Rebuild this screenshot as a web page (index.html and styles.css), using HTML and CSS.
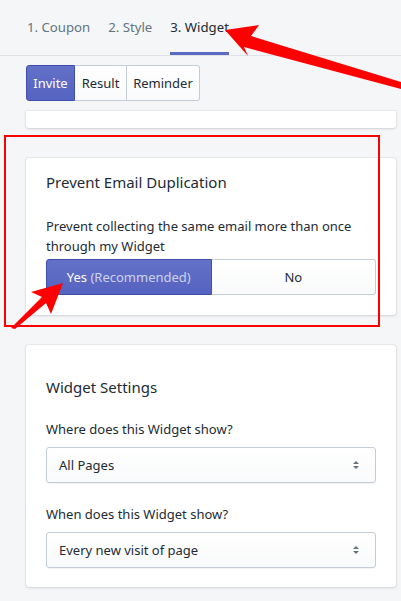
FILE: index.html
```html
<!DOCTYPE html>
<html>
<head>
<meta charset="utf-8">
<link rel="stylesheet" href="styles.css">
</head>
<body>
<div class="page">
  <nav class="tabs">
    <span class="tab">1. Coupon</span>
    <span class="tab">2. Style</span>
    <span class="tab active">3. Widget</span>
  </nav>
  <main class="content">
    <div class="seg">
      <button class="seg-btn primary w-invite">Invite</button>
      <button class="seg-btn w-result">Result</button>
      <button class="seg-btn w-reminder">Reminder</button>
    </div>
    <section class="card card-stub"></section>
    <section class="card card-dup">
      <h2 class="card-title">Prevent Email Duplication</h2>
      <p class="desc">Prevent collecting the same email more than once through my Widget</p>
      <div class="choice">
        <button class="choice-btn primary">Yes <span class="muted">(Recommended)</span></button>
        <button class="choice-btn">No</button>
      </div>
    </section>
    <section class="card card-settings">
      <h2 class="card-title">Widget Settings</h2>
      <label class="field-label">Where does this Widget show?</label>
      <div class="select"><span>All Pages</span><span class="caret"></span></div>
      <label class="field-label">When does this Widget show?</label>
      <div class="select"><span>Every new visit of page</span><span class="caret"></span></div>
    </section>
  </main>
  <div class="annot-box"></div>
  <svg class="annot-arrows" width="401" height="601" viewBox="0 0 401 601">
    <polygon points="225,30 259,25 251,36 401,82 401,89 244,47 248,56" fill="#ff0000"/>
    <polygon points="63,283 31,292 42,297 11,328 15,329 46,303 51,314" fill="#ff0000"/>
  </svg>
</div>
</body>
</html>
```
FILE: styles.css
```css
* { box-sizing: border-box; }
html, body { margin: 0; padding: 0; }
body {
  background: #f4f6f8;
  font-family: "Noto Sans", "Open Sans", sans-serif;
  color: #212b36;
  width: 401px;
  height: 601px;
  overflow: hidden;
}
.page { position: relative; width: 401px; height: 601px; }
.tabs {
  display: flex;
  height: 56px;
  padding-left: 27px;
  border-bottom: 1px solid #dfe3e8;
}
.tab {
  font-size: 13.2px;
  color: #637381;
  padding-top: 18px;
  height: 55px;
  border-bottom: 3px solid transparent;
  margin-right: 18px;
}
.tab.active { color: #212b36; border-bottom-color: #5c6ac4; }
.content {
  padding: 9px 5px 0 26px;
  display: flex;
  flex-direction: column;
}
.seg { display: flex; height: 36px; }
.seg-btn {
  font-family: inherit;
  font-size: 13px;
  color: #212b36;
  background: linear-gradient(#fff, #f9fafb);
  border: 1px solid #c4cdd5;
  border-left: none;
  padding: 0;
  margin: 0;
  height: 36px;
}
.seg-btn:last-child { border-radius: 0 3px 3px 0; }
.seg-btn.primary {
  background: linear-gradient(#6371c7, #5563c1);
  border: 1px solid #3f4eae;
  color: #fff;
  border-radius: 3px 0 0 3px;
}
.w-invite { width: 49px; }
.w-result { width: 52px; }
.w-reminder { width: 73px; }
.card {
  background: #fff;
  border-radius: 3px;
  box-shadow: 0 0 0 1px rgba(63,63,68,.05), 0 1px 3px 0 rgba(63,63,68,.15);
}
.card-stub { height: 17px; margin-top: 10px; border-radius: 0 0 3px 3px; }
.card-dup { margin-top: 30px; padding: 12px 20px 20px; }
.card-settings { margin-top: 30px; padding: 30px 20px 19px; }
.card-title {
  margin: 0;
  font-size: 15px;
  font-weight: 400;
  line-height: 24px;
}
.desc {
  margin: 22px 0 3px;
  font-size: 13px;
  line-height: 20px;
}
.choice { display: flex; height: 36px; }
.choice-btn {
  flex: 1;
  font-family: inherit;
  font-size: 13px;
  margin: 0;
  height: 36px;
  color: #212b36;
  background: linear-gradient(#fff, #f9fafb);
  border: 1px solid #c4cdd5;
  border-left: none;
  border-radius: 0 3px 3px 0;
}
.choice-btn.primary {
  background: linear-gradient(#6371c7, #5563c1);
  border: 1px solid #3f4eae;
  color: #fff;
  border-radius: 3px 0 0 3px;
}
.muted { color: rgba(255,255,255,.7); }
.field-label {
  display: block;
  font-size: 13px;
  line-height: 20px;
  margin: 20px 0 8px;
}
.select {
  height: 36px;
  border: 1px solid #c4cdd5;
  border-radius: 3px;
  background: linear-gradient(#fff, #f9fafb);
  box-shadow: 0 1px 0 0 rgba(22,29,37,.05);
  display: flex;
  align-items: center;
  justify-content: space-between;
  padding: 0 15px 0 12px;
  font-size: 13px;
}
.select + .field-label { margin-top: 21px; }
.caret {
  width: 8px;
  height: 10px;
  position: relative;
}
.caret::before, .caret::after {
  content: "";
  position: absolute;
  left: 1px;
  border-left: 3px solid transparent;
  border-right: 3px solid transparent;
}
.caret::before { top: 1px; border-bottom: 3px solid #637381; }
.caret::after { top: 6px; border-top: 3px solid #637381; }
.annot-box {
  position: absolute;
  left: 4px;
  top: 135px;
  width: 376px;
  height: 192px;
  border: 2px solid #ff0000;
}
.annot-arrows { position: absolute; left: 0; top: 0; pointer-events: none; }
```
